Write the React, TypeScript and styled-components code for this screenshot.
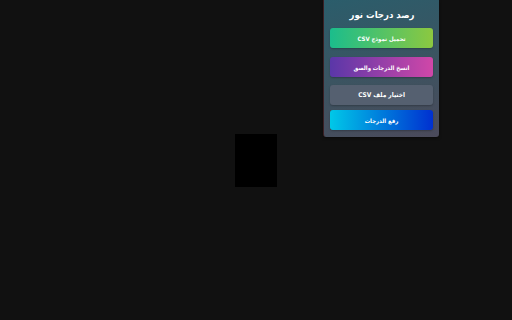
import React from 'react'
import styled, { createGlobalStyle } from 'styled-components'

const GlobalStyle = createGlobalStyle`
  html, body {
    margin: 0;
    padding: 0;
    background: #111111;
    font-family: "DejaVu Sans Condensed", "DejaVu Sans", sans-serif;
    font-stretch: condensed;
  }
`

const Page = styled.div`
  width: 512px;
  height: 320px;
  display: flex;
  align-items: center;
  justify-content: center;
  position: relative;
  overflow: hidden;
`

const Frame = styled.div`
  width: 42px;
  height: 53px;
  background: #000000;
`

const Panel = styled.div`
  position: absolute;
  top: 0;
  left: 323px;
  width: 116px;
  height: 137px;
  box-sizing: border-box;
  padding: 7px 6px 0 7px;
  background: linear-gradient(165deg, #2b5d6b 0%, #3b5461 50%, #4b4a5b 100%);
  border-left: 1px solid #3a1f24;
  border-radius: 0 0 3px 3px;
  box-shadow: 0 1px 3px rgba(0, 0, 0, 0.5);
  direction: rtl;
  display: flex;
  flex-direction: column;
`

const Title = styled.div`
  color: #ffffff;
  font-size: 9.5px;
  font-weight: bold;
  text-align: center;
  line-height: 16px;
  margin-bottom: 5px;
`

const Button = styled.div<{ $bg: string; $gap?: number; $size?: number }>`
  height: 20px;
  width: 103px;
  border-radius: 3px;
  background: ${(p) => p.$bg};
  color: #ffffff;
  font-size: ${(p) => p.$size ?? 6}px;
  font-weight: bold;
  display: flex;
  align-items: center;
  justify-content: center;
  margin-top: ${(p) => p.$gap ?? 0}px;
  box-shadow: 0 1px 2px rgba(0, 0, 0, 0.25);
`

export default function App() {
  return (
    <>
      <GlobalStyle />
      <Page>
        <Frame />
        <Panel>
          <Title>رصد درجات نور</Title>
          <Button $bg="linear-gradient(90deg, #1bbd8c 0%, #8cc840 100%)">
            تحميل نموذج CSV
          </Button>
          <Button
            $gap={9}
            $bg="linear-gradient(90deg, #5a37a8 0%, #d047a8 100%)"
          >
            انسخ الدرجات والصق
          </Button>
          <Button $gap={8} $size={6.5} $bg="#556070">
            اختيار ملف CSV
          </Button>
          <Button
            $gap={5}
            $bg="linear-gradient(90deg, #00c8e8 0%, #0030d0 100%)"
          >
            رفع الدرجات
          </Button>
        </Panel>
      </Page>
    </>
  )
}
